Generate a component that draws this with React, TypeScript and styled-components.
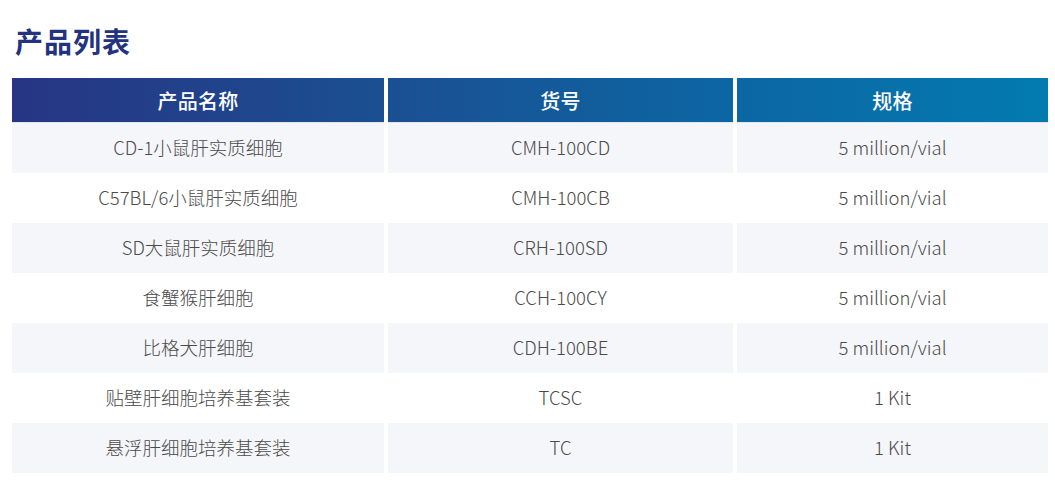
import React from "react";
import styled, { createGlobalStyle } from "styled-components";

const Global = createGlobalStyle`
  html, body { margin: 0; padding: 0; background: #fff; }
  body { font-family: "Noto Sans CJK SC", "Noto Sans", sans-serif; }
`;

const Page = styled.div`
  padding: 21px 7px 0 12px;
`;

const Title = styled.h2`
  margin: 0 0 17px 3px;
  font-size: 28px;
  line-height: 40px;
  font-weight: 700;
  color: #24337f;
  letter-spacing: 1px;
`;

const Table = styled.div`
  display: grid;
  grid-template-columns: 372px 345px 311px;
  column-gap: 4px;
  width: 1036px;
`;

const HeadCell = styled.div`
  height: 44px;
  border-bottom: 1px solid #dfe6f2;
  display: flex;
  align-items: center;
  justify-content: center;
  color: #fff;
  font-size: 20px;
  font-weight: 500;
  letter-spacing: 0.3px;
  background: linear-gradient(90deg, #273584 12px, #1b4f92 380px, #0c66a3 730px, #037bb0 1048px) fixed;
`;

const Cell = styled.div<{ $striped: boolean }>`
  height: 50px;
  display: flex;
  align-items: center;
  justify-content: center;
  background: ${(p) => (p.$striped ? "#f5f6fa" : "#ffffff")};
  color: #4a4a4a;
  font-size: 18.5px;
  font-weight: 300;
  padding-bottom: 2px;
  box-sizing: border-box;
`;

const rows: [string, string, string][] = [
  ["CD-1小鼠肝实质细胞", "CMH-100CD", "5 million/vial"],
  ["C57BL/6小鼠肝实质细胞", "CMH-100CB", "5 million/vial"],
  ["SD大鼠肝实质细胞", "CRH-100SD", "5 million/vial"],
  ["食蟹猴肝细胞", "CCH-100CY", "5 million/vial"],
  ["比格犬肝细胞", "CDH-100BE", "5 million/vial"],
  ["贴壁肝细胞培养基套装", "TCSC", "1 Kit"],
  ["悬浮肝细胞培养基套装", "TC", "1 Kit"],
];

export default function App() {
  return (
    <Page>
      <Global />
      <Title>产品列表</Title>
      <Table>
        <HeadCell>产品名称</HeadCell>
        <HeadCell>货号</HeadCell>
        <HeadCell>规格</HeadCell>
        {rows.map((r, i) =>
          r.map((c, j) => (
            <Cell key={`${i}-${j}`} $striped={i % 2 === 0}>
              {c}
            </Cell>
          ))
        )}
      </Table>
    </Page>
  );
}
